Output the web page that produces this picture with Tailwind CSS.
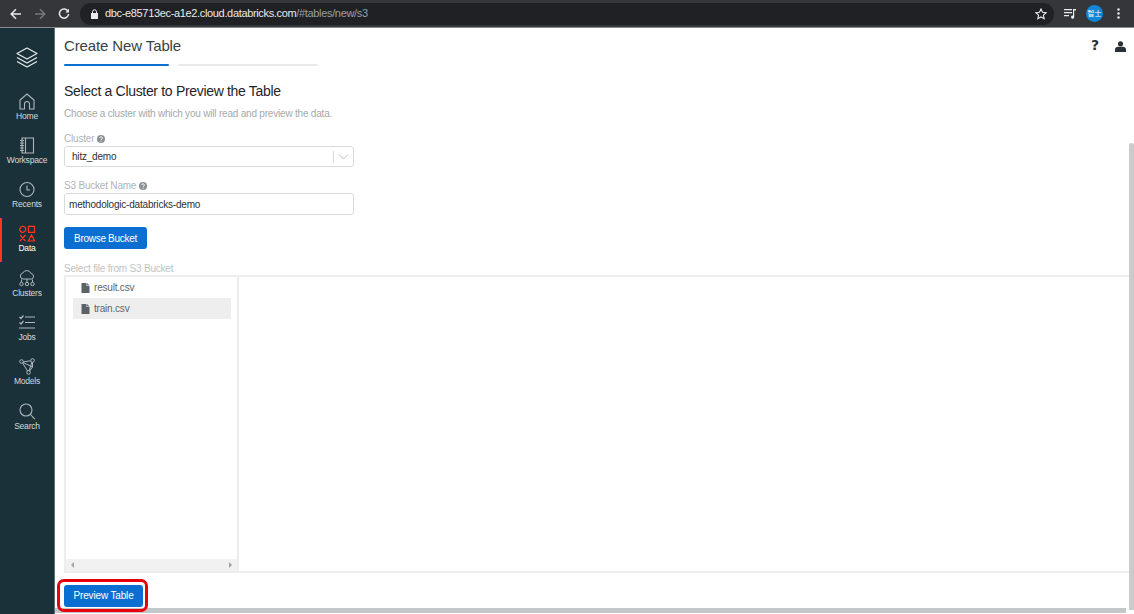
<!DOCTYPE html>
<html lang="en">
<head>
    <meta charset="UTF-8">
    <script src="https://cdn.jsdelivr.net/npm/@tailwindcss/browser@4"></script>
    <title>Create New Table</title>
</head>
<body class="w-[1134px] h-[614px] overflow-hidden flex flex-col bg-white font-['Liberation_Sans',Arial,sans-serif]">
    <!-- browser toolbar -->
    <div class="h-[28px] shrink-0 flex items-center bg-[#35363a] border-b border-[#8a8b8d] relative">
        <svg class="ml-[10px] w-[12px] h-[12px]" viewBox="0 0 12 12" fill="none" stroke="#e8eaed" stroke-width="1.5"><path d="M11 6H1.5M6 1.2 1.2 6 6 10.8"/></svg>
        <svg class="ml-[12px] w-[12px] h-[12px]" viewBox="0 0 12 12" fill="none" stroke="#77787b" stroke-width="1.5"><path d="M1 6h9.5M6 1.2 10.8 6 6 10.8"/></svg>
        <svg class="ml-[12px] w-[12px] h-[12px]" viewBox="0 0 12 12" fill="none" stroke="#e8eaed" stroke-width="1.5"><path d="M10 3.2A4.6 4.6 0 1 0 10.6 6"/><path d="M11 .8v3.7H7.3z" fill="#e8eaed" stroke="none"/></svg>
        <div class="ml-[10px] w-[974px] h-[22px] rounded-full bg-[#202124] flex items-center pl-[10px]">
            <svg class="w-[9px] h-[10px]" viewBox="0 0 9 10" fill="#e8eaed"><path d="M1 4h7v6H1z"/><path d="M2.5 4V2.8a2 2 0 0 1 4 0V4" fill="none" stroke="#e8eaed"/></svg>
            <span class="ml-[6px] text-[11px] tracking-[-0.34px] text-[#e8eaed] whitespace-nowrap">dbc-e85713ec-a1e2.cloud.databricks.com<span class="text-[#9aa0a6]">/#tables/new/s3</span></span>
            <svg class="ml-auto mr-[7px] w-[12px] h-[12px]" viewBox="0 0 12 12" fill="none" stroke="#e8eaed" stroke-width="1.1"><path d="m6 1 1.5 3.3 3.6.4-2.7 2.4.8 3.6L6 8.9l-3.2 1.8.8-3.6L.9 4.7l3.6-.4z"/></svg>
        </div>
        <svg class="ml-[10px] w-[12px] h-[11px]" viewBox="0 0 12 11" fill="#e8eaed"><path d="M0 1h8v1.2H0zM0 4h8v1.2H0zM0 7h5v1.2H0zM9 1h3v1.5h-1.8v6.7a1.6 1.6 0 1 1-1.2-1.5z"/></svg>
        <div class="ml-[10px] w-[17px] h-[17px] rounded-full bg-[#0f86d6] text-[7px] text-white flex items-center justify-center font-['Noto_Sans_CJK_JP',sans-serif]">智士</div>
        <svg class="ml-[14px] w-[3px] h-[11px]" viewBox="0 0 3 11" fill="#e8eaed"><circle cx="1.5" cy="1.5" r="1.2"/><circle cx="1.5" cy="5.5" r="1.2"/><circle cx="1.5" cy="9.5" r="1.2"/></svg>
    </div>

    <div class="flex-1 flex min-h-0 relative">
        <!-- sidebar -->
        <nav class="w-[55px] shrink-0 bg-[#1b3139] flex flex-col items-center text-[8.5px] tracking-[-0.2px] text-[#d5dadc] border-r border-[#5f6f76]">
            <div class="h-[59px] w-full flex items-center justify-center">
                <svg class="w-[22px] h-[24px]" viewBox="0 0 22 24" fill="none" stroke="#e6eaeb" stroke-width="1.2" stroke-linejoin="round"><path d="M11 2 21 7.5 11 13 1 7.5zM1 11.5 11 17l10-5.500M1 15.5 11 21l10-5.500"/></svg>
            </div>
            <div class="h-[44px] w-full flex flex-col items-center justify-end pb-[7px] -mt-[1px]">
                <svg class="w-[16px] h-[17px]" viewBox="0 0 16 17" fill="none" stroke="#aeb8bc" stroke-width="1.1"><path d="M1 7 8 1l7 6v9h-4.500v-5a2.500 2.500 0 0 0-5 0v5H1z"/></svg>
                <span>Home</span>
            </div>
            <div class="h-[44px] w-full flex flex-col items-center justify-end pb-[7px]">
                <svg class="w-[16px] h-[17px]" viewBox="0 0 16 17" fill="none" stroke="#aeb8bc" stroke-width="1.1"><path d="M3 1h11.500v15H3zM6.500 1v15M1 3.500h4M1 6h4M1 8.500h4M1 11h4M1 13.500h4"/></svg>
                <span>Workspace</span>
            </div>
            <div class="h-[44px] w-full flex flex-col items-center justify-end pb-[7px]">
                <svg class="w-[16px] h-[17px]" viewBox="0 0 16 17" fill="none" stroke="#aeb8bc" stroke-width="1.1"><circle cx="8" cy="8.500" r="7"/><path d="M8 4.500v4.500h3"/></svg>
                <span>Recents</span>
            </div>
            <div class="h-[44px] w-full flex flex-col items-center justify-end pb-[7px] relative text-white">
                <div class="absolute left-0 top-0 w-[2px] h-[44px] bg-[#ff3621]"></div>
                <svg class="w-[16px] h-[17px]" viewBox="0 0 16 17" fill="none" stroke="#ff3621" stroke-width="1.2"><circle cx="3.800" cy="4.300" r="3"/><path d="M9.500 1.300h6v6h-6zM1 10l5.500 6M6.500 10 1 16M12.500 10l3.200 6H9.300z"/></svg>
                <span>Data</span>
            </div>
            <div class="h-[45px] w-full flex flex-col items-center justify-end pb-[7px]">
                <svg class="w-[16px] h-[17px]" viewBox="0 0 16 17" fill="none" stroke="#aeb8bc" stroke-width="1"><path d="M4 9a3 3 0 0 1-.300-5.900A4.500 4.500 0 0 1 12 3.500 2.800 2.800 0 0 1 12.500 9zM2.500 12V9.500M8 12V9M13.500 12V9.500"/><circle cx="2.500" cy="14" r="1.700"/><circle cx="8" cy="14" r="1.700"/><circle cx="13.500" cy="14" r="1.700"/></svg>
                <span>Clusters</span>
            </div>
            <div class="h-[44px] w-full flex flex-col items-center justify-end pb-[7px]">
                <svg class="w-[16px] h-[17px]" viewBox="0 0 16 17" fill="none" stroke="#aeb8bc" stroke-width="1.200"><path d="M6 3h10M6 8.500h10M0 14h16M.5 3 2 4.500 4.500 1.500M.5 8.500 2 10l2.500-3"/></svg>
                <span>Jobs</span>
            </div>
            <div class="h-[44px] w-full flex flex-col items-center justify-end pb-[7px]">
                <svg class="w-[16px] h-[17px]" viewBox="0 0 16 17" fill="none" stroke="#aeb8bc" stroke-width="1"><path d="M3 4 13.500 2.500 9.500 14.500zM3 4 13.500 9M13.500 2.500V9L9.500 14.500"/><circle cx="2.500" cy="3.500" r="1.800" fill="#1b3139"/><circle cx="13.500" cy="2.500" r="1.800" fill="#1b3139"/><circle cx="9.500" cy="14.500" r="1.800" fill="#1b3139"/></svg>
                <span>Models</span>
            </div>
            <div class="h-[45px] w-full flex flex-col items-center justify-end pb-[7px]">
                <svg class="w-[16px] h-[17px]" viewBox="0 0 16 17" fill="none" stroke="#aeb8bc" stroke-width="1.100"><circle cx="7" cy="7" r="6"/><path d="m11.500 11.500 4.300 4.700"/></svg>
                <span>Search</span>
            </div>
        </nav>

        <!-- main -->
        <main class="flex-1 min-w-0 flex flex-col relative">
            <div class="h-[36px] shrink-0 flex items-center pl-[9px] relative">
                <h1 class="text-[15px] tracking-[-0.12px] text-[#3a4248]">Create New Table</h1>
                <span class="absolute left-[1036px] top-[10px] text-[14px] font-bold leading-none text-[#2a2f33] font-['DejaVu_Sans',sans-serif]">?</span>
                <svg class="absolute left-[1060px] top-[13px] w-[11px] h-[11px]" viewBox="0 0 11 11" fill="#2a3138"><circle cx="5.500" cy="2.800" r="2.600"/><path d="M0 11V8.500C0 6.800 1.500 5.800 3 5.800h5c1.500 0 3 1 3 2.700V11z"/></svg>
            </div>
            <div class="flex pl-[9px] gap-[9px] h-[1px] items-start">
                <div class="w-[105px] h-[2px] bg-[#0a6fd0] rounded-full"></div>
                <div class="w-[140px] h-[2px] bg-[#e7e9ea] rounded-full"></div>
            </div>

            <div class="pl-[9px] pt-[16px] w-[299px] shrink-0 tracking-[-0.2px]">
                <h2 class="text-[14px] tracking-[-0.32px] leading-[20px] text-[#1f2428] whitespace-nowrap">Select a Cluster to Preview the Table</h2>
                <p class="mt-[6px] text-[10px] leading-[14px] text-[#a4a9ac] whitespace-nowrap">Choose a cluster with which you will read and preview the data.</p>

                <label class="mt-[12px] flex items-center gap-[3px] text-[10px] leading-[12px] text-[#b0b4b7]">Cluster
                    <svg class="w-[8px] h-[8px]" viewBox="0 0 8 8"><circle cx="4" cy="4" r="4" fill="#8a9094"/><path d="M2.700 3a1.300 1.300 0 1 1 1.800 1.300c-.4.2-.5.4-.5.8" fill="none" stroke="#fff"/><path d="M3.600 5.800h.9v.9h-.9z" fill="#fff"/></svg>
                </label>
                <div class="mt-[1px] h-[21px] flex items-center border border-[#d8dadb] rounded-[3px] pl-[7px] text-[10px] text-[#2c3236]">
                    <span>hitz_demo</span>
                    <span class="ml-auto h-[12px] border-l border-[#d8dadb]"></span>
                    <svg class="mx-[4px] w-[11px] h-[6px]" viewBox="0 0 11 6" fill="none" stroke="#b9bdc0"><path d="m1 .5 4.500 4.500L10 .5"/></svg>
                </div>

                <label class="mt-[13px] flex items-center gap-[3px] text-[10px] leading-[12px] text-[#b0b4b7]">S3 Bucket Name
                    <svg class="w-[8px] h-[8px]" viewBox="0 0 8 8"><circle cx="4" cy="4" r="4" fill="#8a9094"/><path d="M2.700 3a1.300 1.300 0 1 1 1.800 1.300c-.4.2-.5.4-.5.8" fill="none" stroke="#fff"/><path d="M3.600 5.800h.9v.9h-.9z" fill="#fff"/></svg>
                </label>
                <div class="mt-[1px] h-[22px] flex items-center border border-[#d8dadb] rounded-[3px] pl-[4px] text-[10px] text-[#2c3236]">methodologic-databricks-demo</div>

                <button class="mt-[12px] h-[22px] w-[83px] rounded-[3px] bg-[#0a6fd0] text-[10px] tracking-[-0.3px] text-white">Browse Bucket</button>
                <p class="mt-[14px] text-[10px] leading-[12px] text-[#c0c3c5] whitespace-nowrap">Select file from S3 Bucket</p>
            </div>

            <!-- file browser -->
            <div class="ml-[9px] h-[298px] shrink-0 border-t-2 border-b-2 border-[#eceded] flex">
                <div class="w-[175px] border-l-2 border-r-2 border-[#eceded] flex flex-col">
                    <div class="flex-1 pl-[7px] pr-[6px] tracking-[-0.2px]">
                        <div class="h-[21px] flex items-center pl-[8px] gap-[4px] text-[10px] text-[#5f666a]">
                            <svg class="w-[9px] h-[10px]" viewBox="0 0 8 10" fill="#5b6267"><path d="M0 0h5v3h3v7H0zM5.600 0 8 2.400H5.600z"/></svg>result.csv
                        </div>
                        <div class="h-[21px] flex items-center pl-[8px] gap-[4px] text-[10px] text-[#5f666a] bg-[#eeeeee]">
                            <svg class="w-[9px] h-[10px]" viewBox="0 0 8 10" fill="#5b6267"><path d="M0 0h5v3h3v7H0zM5.600 0 8 2.400H5.600z"/></svg>train.csv
                        </div>
                    </div>
                    <div class="h-[12px] bg-[#f1f1f1] flex items-center justify-between px-[5px]">
                        <svg class="w-[3px] h-[6px]" viewBox="0 0 3 6" fill="#a3a3a3"><path d="M3 0v6L0 3z"/></svg>
                        <svg class="w-[3px] h-[6px]" viewBox="0 0 3 6" fill="#a3a3a3"><path d="M0 0v6l3-3z"/></svg>
                    </div>
                </div>
            </div>

            <div class="pl-[9px] pt-[9px]">
                <button class="h-[22px] w-[79px] rounded-[3px] bg-[#0a6fd0] text-[10px] tracking-[-0.15px] text-white">Preview Table</button>
            </div>

            <!-- scrollbars and the red annotation lie over the page -->
            <div class="absolute right-0 top-[115px] w-[5px] h-[467px] bg-[#c8cccd] rounded-t-sm"></div>
            <div class="absolute left-0 right-[8px] top-[580px] h-[5px] bg-[#c3c7c8]"></div>
            <div class="absolute left-[2px] top-[551px] w-[91px] h-[33px] border-[3px] border-[#e8000d] rounded-[7px]"></div>
        </main>
    </div>
</body>
</html>
